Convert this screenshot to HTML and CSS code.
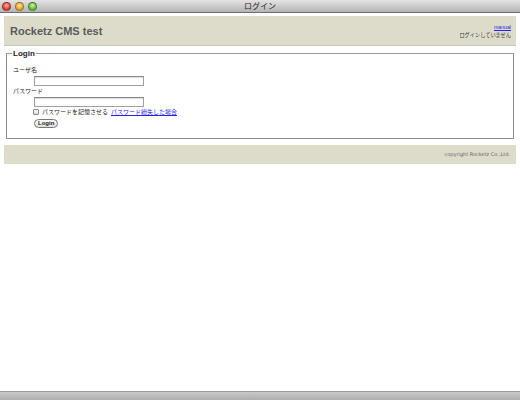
FILE: index.html
```html
<!DOCTYPE html>
<html>
<head>
<meta charset="utf-8">
<link rel="stylesheet" href="styles.css">
</head>
<body>
<div class="window">
  <div class="titlebar">
    <div class="lights">
      <span class="light red"></span>
      <span class="light yellow"></span>
      <span class="light green"></span>
    </div>
    <div class="title">ログイン</div>
  </div>
  <div class="content">
    <div class="header">
      <h1 class="site-title">Rocketz CMS test</h1>
      <div class="status">
        <a href="#" class="manual">manual</a>
        <div>ログインしていません</div>
      </div>
    </div>
    <fieldset class="login">
      <legend>Login</legend>
      <div class="label first">ユーザ名</div>
      <input type="text" class="field">
      <div class="label">パスワード</div>
      <input type="password" class="field">
      <div class="remember">
        <input type="checkbox" class="check">
        <span>パスワードを記憶させる</span>
        <a href="#">パスワード紛失した場合</a>
      </div>
      <button class="btn">Login</button>
    </fieldset>
    <div class="footer">copyright Rocketz Co.,Ltd.</div>
  </div>
  <div class="bottombar"></div>
</div>
</body>
</html>
```

FILE: styles.css
```css
html, body {
  margin: 0;
  padding: 0;
  background: #fff;
}
.window {
  width: 520px;
  height: 400px;
  display: flex;
  flex-direction: column;
  font-family: "DejaVu Sans", "Noto Sans CJK JP", sans-serif;
  overflow: hidden;
}
.titlebar {
  height: 12px;
  background: linear-gradient(#e4e4e4, #b4b4b4);
  border-bottom: 1px solid #6e6e6e;
  display: flex;
  align-items: center;
  position: relative;
}
.lights {
  display: flex;
  gap: 4px;
  padding-left: 2px;
}
.light {
  width: 7px;
  height: 7px;
  border-radius: 50%;
  border: 0.5px solid rgba(0,0,0,0.35);
}
.red { background: radial-gradient(circle at 50% 35%, #ffb0a8, #d9352c 70%); }
.yellow { background: radial-gradient(circle at 50% 35%, #ffe6a0, #e39f1c 70%); }
.green { background: radial-gradient(circle at 50% 35%, #cff2b0, #5bb52f 70%); }
.title {
  position: absolute;
  left: 0;
  right: 0;
  text-align: center;
  font-size: 8px;
  color: #222;
  line-height: 12px;
  font-family: "Noto Sans CJK JP", sans-serif;
}
.content {
  flex: 1;
  padding: 3px 4px 0;
}
.header {
  background: #dddccb;
  border-bottom: 1px solid #c8c8b8;
  height: 29px;
  display: flex;
  justify-content: space-between;
  align-items: center;
  padding: 0 5px 0 6px;
}
.site-title {
  margin: 0;
  font-family: "Liberation Sans", Arial, sans-serif;
  font-weight: bold;
  font-size: 11px;
  color: #5a5a5a;
}
.status {
  text-align: right;
  font-size: 5.2px;
  color: #333;
  line-height: 8px;
  font-family: "Noto Sans CJK JP", sans-serif;
}
.manual {
  color: #2222ee;
  font-family: "Liberation Sans", sans-serif;
}
.login {
  margin: 3px 2px 0;
  border: 1px solid #8c8c8c;
  border-top-color: #9a9a9a;
  padding: 4px 6px 10px;
  font-size: 6px;
  color: #222;
  font-family: "Noto Sans CJK JP", sans-serif;
}
.login legend {
  font-family: "Liberation Sans", sans-serif;
  font-weight: bold;
  font-size: 8px;
  color: #222;
  padding: 0 1px;
  margin-left: -1px;
}
.label {
  line-height: 8px;
  margin-top: 0;
}
.label.first {
  margin-top: 4px;
}
.field {
  display: block;
  width: 108px;
  height: 8px;
  margin: 2px 0 1px 21px;
  padding: 0;
  border: 1px solid #a0a0a0;
  border-top-color: #888;
  box-shadow: inset 0 1px 1px #ddd;
}
.remember {
  display: flex;
  align-items: center;
  gap: 2px;
  margin: 1px 0 0 20px;
  line-height: 8px;
}
.check {
  appearance: none;
  -webkit-appearance: none;
  width: 6px;
  height: 6px;
  margin: 0 1px 0 0;
  border: 1px solid #888;
  border-radius: 1px;
  background: linear-gradient(#fff, #ddd);
}
.remember a {
  color: #2222ee;
  margin-left: 1px;
}
.btn {
  display: block;
  margin: 3px 0 0 21px;
  font-size: 6px;
  font-family: "Liberation Sans", sans-serif;
  font-weight: bold;
  padding: 0 3px;
  height: 9px;
  line-height: 7px;
  border: 1px solid #777;
  border-radius: 5px;
  background: linear-gradient(#fff, #ddd);
  color: #222;
}
.footer {
  margin-top: 6px;
  background: #dddccb;
  height: 19px;
  line-height: 19px;
  text-align: right;
  padding-right: 6px;
  font-size: 5px;
  color: #666;
  font-family: "DejaVu Sans", sans-serif;
}
.bottombar {
  height: 8px;
  background: linear-gradient(#c9c9c9, #aeaeae);
  border-top: 1px solid #9a9a9a;
}
```
